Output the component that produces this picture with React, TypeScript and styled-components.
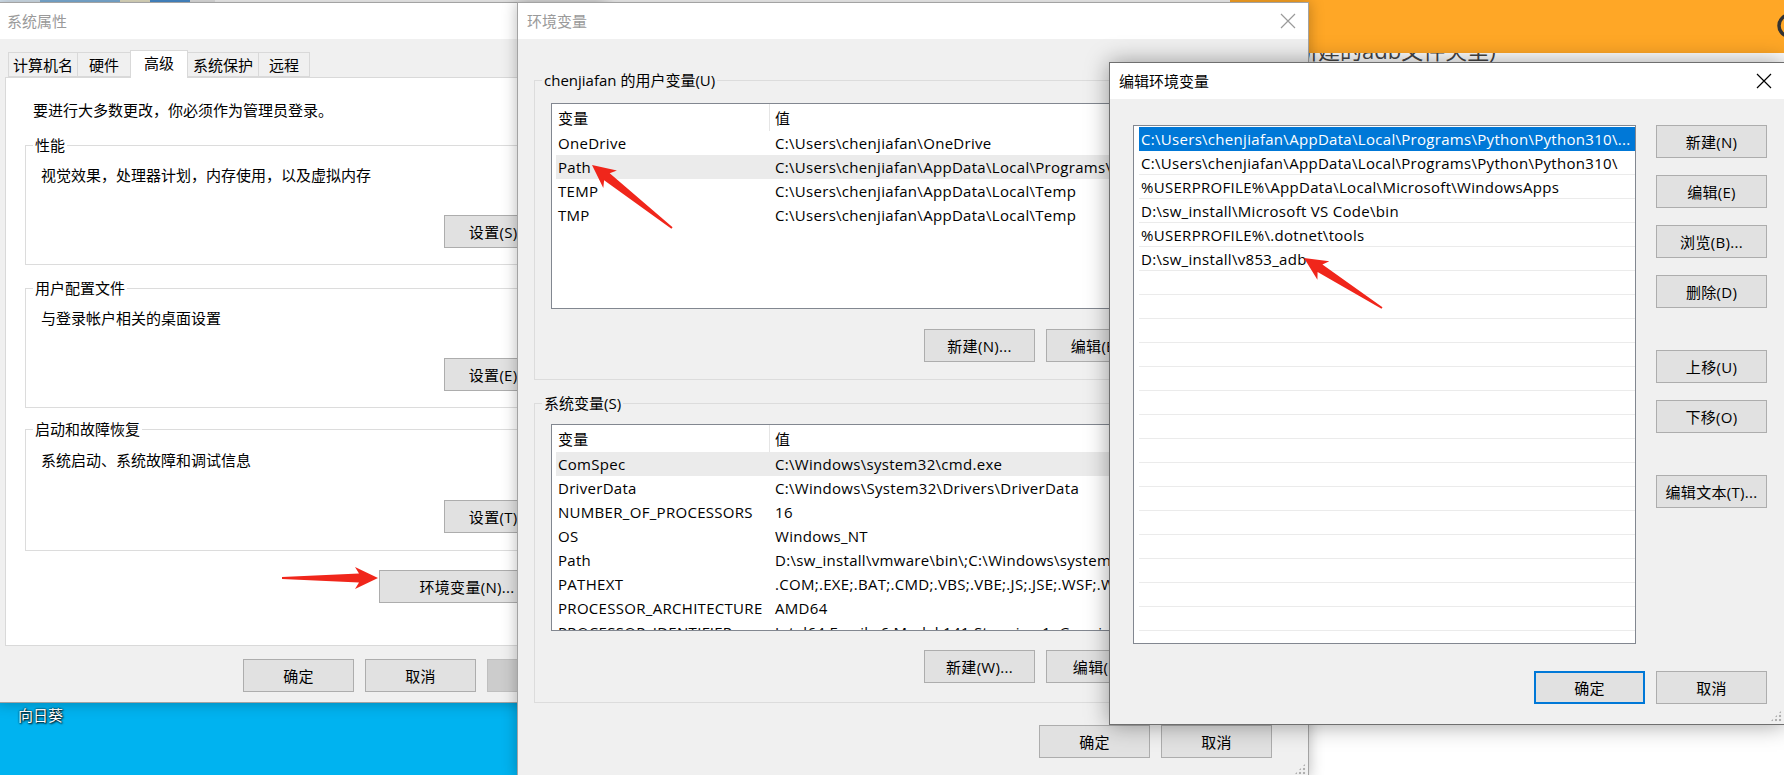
import styled, { createGlobalStyle } from 'styled-components';
import { Search } from 'lucide-react';

const GlobalStyle = createGlobalStyle`
  html, body {
    margin: 0;
    padding: 0;
    overflow: hidden;
  }
  body {
    font-family: "Open Sans", "Noto Sans CJK SC", sans-serif;
    font-size: 15px;
    line-height: 20px;
    letter-spacing: 0.3px;
    color: #000;
  }
  * {
    box-sizing: border-box;
  }
`;

const Desktop = styled.div`
  position: relative;
  width: 1784px;
  height: 775px;
  overflow: hidden;
  background: #00b3f0;
`;

const TopStrip = styled.div`
  position: absolute;
  left: 0;
  top: 0;
  width: 1240px;
  height: 4px;
  background: linear-gradient(
    to right,
    #d8e6f2 0 40px,
    #7fb2dc 40px 120px,
    #e9e4c8 120px 150px,
    #4a8fd1 150px 190px,
    #e6e6e6 190px 215px,
    #fafafa 215px
  );
`;

const DesktopLabel = styled.div`
  position: absolute;
  left: 18px;
  top: 705px;
  color: #fff;
  letter-spacing: 0;
  text-shadow: 1px 1px 2px #000, 0 0 2px #000;
`;

const Browser = styled.div`
  position: absolute;
  left: 1230px;
  top: 0;
  width: 560px;
  height: 775px;
  z-index: 1;
  display: flex;
  flex-direction: column;
  background: #fff;
`;

const BrowserHeader = styled.div`
  position: relative;
  z-index: 1;
  flex: none;
  height: 53px;
  display: flex;
  align-items: center;
  justify-content: flex-end;
  background: #ffa726;
  color: #333;

  svg {
    margin-right: -17px;
  }
`;

const BrowserText = styled.div`
  margin-top: -18px;
  padding-right: 324px;
  text-align: right;
  font-size: 22px;
  line-height: 30px;
  letter-spacing: 0;
  color: #444;
  white-space: nowrap;
`;

const Win = styled.div<{
  $x: number;
  $y: number;
  $w: number;
  $h: number;
  $z: number;
  $active?: boolean;
}>`
  position: absolute;
  left: ${p => p.$x}px;
  top: ${p => p.$y}px;
  width: ${p => p.$w}px;
  height: ${p => p.$h}px;
  z-index: ${p => p.$z};
  display: flex;
  flex-direction: column;
  background: #f0f0f0;
  border: 1px solid ${p => (p.$active ? '#6f6f6f' : '#a3a3a3')};
  box-shadow: ${p =>
    p.$active ? '0 0 22px rgba(0, 0, 0, 0.38)' : '0 0 14px rgba(0, 0, 0, 0.28)'};
`;

const TitleBar = styled.div<{$active?: boolean}>`
  flex: none;
  height: 36px;
  display: flex;
  align-items: center;
  justify-content: space-between;
  padding-left: 9px;
  background: #fff;
  letter-spacing: 0;
  color: ${p => (p.$active ? '#000' : '#9a9a9a')};
`;

const CloseIcon = styled.svg`
  margin-right: 12px;
`;

const Grip = styled.div`
  position: absolute;
  right: 2px;
  bottom: 2px;
  width: 12px;
  height: 12px;
  background: radial-gradient(circle, #b0b0b0 1px, transparent 1.6px) 0 0 / 4px 4px;
  clip-path: polygon(100% 0, 100% 100%, 0 100%);
`;

const Btn = styled.button<{$w?: number; $mt?: number; $focus?: boolean; $off?: boolean}>`
  flex: none;
  width: ${p => p.$w ?? 111}px;
  height: 33px;
  margin: ${p => p.$mt ?? 0}px 0 0 0;
  padding: 0;
  background: ${p => (p.$off ? '#cccccc' : '#e1e1e1')};
  border: ${p =>
    p.$focus ? '2px solid #0078d7' : `1px solid ${p.$off ? '#bfbfbf' : '#adadad'}`};
  color: ${p => (p.$off ? '#838383' : '#000')};
  font: inherit;
  letter-spacing: inherit;
  white-space: nowrap;
  overflow: hidden;
`;

const ButtonRow = styled.div<{$mt?: number; $gap?: number; $pr?: number}>`
  display: flex;
  justify-content: flex-end;
  gap: ${p => p.$gap ?? 11}px;
  margin-top: ${p => p.$mt ?? 0}px;
  padding-right: ${p => p.$pr ?? 0}px;
`;

/* system properties */

const SysBody = styled.div`
  flex: 1;
  display: flex;
  flex-direction: column;
  padding: 11px 7px 0 7px;
`;

const TabStrip = styled.div`
  display: flex;
  align-items: flex-end;
  height: 27px;
  margin-left: 3px;
`;

const Tab = styled.div<{$w: number; $active?: boolean}>`
  position: relative;
  z-index: ${p => (p.$active ? 1 : 0)};
  width: ${p => p.$w}px;
  height: ${p => (p.$active ? 28 : 25)}px;
  margin-bottom: ${p => (p.$active ? -1 : 0)}px;
  display: flex;
  align-items: center;
  justify-content: center;
  padding-bottom: ${p => (p.$active ? 4 : 0)}px;
  background: ${p => (p.$active ? '#fff' : '#f0f0f0')};
  border: 1px solid #d9d9d9;
  border-bottom: ${p => (p.$active ? 'none' : '1px solid #d9d9d9')};
  margin-right: -1px;
  letter-spacing: 0;
`;

const TabPanel = styled.div`
  height: 569px;
  display: flex;
  flex-direction: column;
  padding: 22px 20px 0 19px;
  background: #fff;
  border: 1px solid #d9d9d9;
`;

const Intro = styled.div`
  margin-left: 8px;
  letter-spacing: 0;
`;

const Group = styled.fieldset<{$mt: number; $pb: number}>`
  margin: ${p => p.$mt}px 0 0 0;
  padding: 0 21px ${p => p.$pb}px 0;
  min-width: 0;
  border: 1px solid #dcdcdc;
  display: flex;
  flex-direction: column;
`;

const Legend = styled.legend`
  margin-left: 7px;
  padding: 0 2px;
  line-height: 20px;
  letter-spacing: 0;
`;

const GroupText = styled.div<{$mt: number}>`
  margin: ${p => p.$mt}px 0 0 15px;
  letter-spacing: 0;
`;

/* environment variables */

const EnvBody = styled.div`
  flex: 1;
  display: flex;
  flex-direction: column;
  padding: 31px 16px 0 16px;
`;

const VarGroup = styled.fieldset<{$mt: number; $pb: number}>`
  margin: ${p => p.$mt}px 0 0 0;
  padding: 0 12px ${p => p.$pb}px 0;
  min-width: 0;
  border: 1px solid #dcdcdc;
  display: flex;
  flex-direction: column;
`;

const ListView = styled.div<{$mt: number; $h: number}>`
  height: ${p => p.$h}px;
  margin: ${p => p.$mt}px 0 0 16px;
  padding-left: 4px;
  background: #fff;
  border: 1px solid #828790;
  overflow: hidden;
`;

const ListHead = styled.div`
  display: grid;
  grid-template-columns: 213px 1fr;
  height: 27px;
  white-space: nowrap;
`;

const HeadCell = styled.div<{$divider?: boolean}>`
  display: flex;
  align-items: center;
  padding-left: ${p => (p.$divider ? 5 : 2)}px;
  border-left: ${p => (p.$divider ? '1px solid #e5e5e5' : 'none')};
  overflow: hidden;
`;

const ListRow = styled.div<{$sel?: boolean}>`
  display: grid;
  grid-template-columns: 213px 1fr;
  align-items: center;
  height: 24px;
  white-space: nowrap;
  background: ${p => (p.$sel ? '#ebebeb' : 'transparent')};
`;

const Cell = styled.div<{$value?: boolean}>`
  padding-left: ${p => (p.$value ? 6 : 2)}px;
  overflow: hidden;
`;

/* edit dialog */

const EditBody = styled.div`
  flex: 1;
  display: flex;
  flex-direction: column;
  padding: 26px 17px 0 23px;
`;

const EditMain = styled.div`
  display: flex;
  gap: 20px;
`;

const PathList = styled.div`
  width: 503px;
  height: 519px;
  padding: 1px 0 0 5px;
  background: #fff;
  border: 1px solid #828790;
  overflow: hidden;
`;

const PathRow = styled.div<{$sel?: boolean}>`
  height: 24px;
  display: flex;
  align-items: center;
  padding-left: 2px;
  white-space: nowrap;
  overflow: hidden;
  border-bottom: 1px solid ${p => (p.$sel ? '#0078d7' : '#ebebeb')};
  background: ${p => (p.$sel ? '#0078d7' : 'transparent')};
  color: ${p => (p.$sel ? '#fff' : '#000')};
`;

const SideButtons = styled.div`
  display: flex;
  flex-direction: column;
`;

const Overlay = styled.svg`
  position: absolute;
  left: 0;
  top: 0;
  z-index: 10;
  pointer-events: none;
`;

const userVars = [
  ['OneDrive', 'C:\\Users\\chenjiafan\\OneDrive'],
  ['Path', 'C:\\Users\\chenjiafan\\AppData\\Local\\Programs\\Python\\Python310\\Scripts\\;C:\\Users'],
  ['TEMP', 'C:\\Users\\chenjiafan\\AppData\\Local\\Temp'],
  ['TMP', 'C:\\Users\\chenjiafan\\AppData\\Local\\Temp'],
];

const sysVars = [
  ['ComSpec', 'C:\\Windows\\system32\\cmd.exe'],
  ['DriverData', 'C:\\Windows\\System32\\Drivers\\DriverData'],
  ['NUMBER_OF_PROCESSORS', '16'],
  ['OS', 'Windows_NT'],
  ['Path', 'D:\\sw_install\\vmware\\bin\\;C:\\Windows\\system32;C:\\Windows'],
  ['PATHEXT', '.COM;.EXE;.BAT;.CMD;.VBS;.VBE;.JS;.JSE;.WSF;.WSH;.MSC'],
  ['PROCESSOR_ARCHITECTURE', 'AMD64'],
  ['PROCESSOR_IDENTIFIER', 'Intel64 Family 6 Model 141 Stepping 1, GenuineIntel'],
];

const paths = [
  'C:\\Users\\chenjiafan\\AppData\\Local\\Programs\\Python\\Python310\\...',
  'C:\\Users\\chenjiafan\\AppData\\Local\\Programs\\Python\\Python310\\',
  '%USERPROFILE%\\AppData\\Local\\Microsoft\\WindowsApps',
  'D:\\sw_install\\Microsoft VS Code\\bin',
  '%USERPROFILE%\\.dotnet\\tools',
  'D:\\sw_install\\v853_adb',
];

const tabs = [
  {label: '计算机名', w: 70},
  {label: '硬件', w: 54},
  {label: '高级', w: 58, active: true},
  {label: '系统保护', w: 72},
  {label: '远程', w: 52},
];

// tip / tail of the red annotation arrows
const arrows: [number, number, number, number][] = [
  [378, 578, 282, 578],
  [592, 165, 672, 228],
  [1304, 258, 1382, 308],
];

function arrowPoints([tx, ty, sx, sy]: [number, number, number, number]) {
  const len = Math.hypot(tx - sx, ty - sy);
  const ux = (tx - sx) / len;
  const uy = (ty - sy) / len;
  const nx = -uy;
  const ny = ux;
  const headLen = 23;
  const headHalf = 11;
  const neckHalf = 4.5;
  const tailHalf = 1;
  const at = (d: number, w: number) =>
    `${(tx - ux * d + nx * w).toFixed(1)},${(ty - uy * d + ny * w).toFixed(1)}`;
  return [
    at(len, tailHalf),
    at(headLen - 4, neckHalf),
    at(headLen, headHalf),
    at(0, 0),
    at(headLen, -headHalf),
    at(headLen - 4, -neckHalf),
    at(len, -tailHalf),
  ].join(' ');
}

function Close() {
  return (
    <CloseIcon width="16" height="16" viewBox="0 0 16 16">
      <path d="M1 1L15 15M15 1L1 15" stroke="currentColor" strokeWidth="1.2" fill="none" />
    </CloseIcon>
  );
}

function VarList({rows, mt, h, sel}: {rows: string[][]; mt: number; h: number; sel: number}) {
  return (
    <ListView $mt={mt} $h={h}>
      <ListHead>
        <HeadCell>变量</HeadCell>
        <HeadCell $divider>值</HeadCell>
      </ListHead>
      {rows.map(([name, value], i) => (
        <ListRow key={name + i} $sel={i === sel}>
          <Cell>{name}</Cell>
          <Cell $value>{value}</Cell>
        </ListRow>
      ))}
    </ListView>
  );
}

export default function App() {
  return (
    <Desktop>
      <GlobalStyle />
      <TopStrip />
      <DesktopLabel>向日葵</DesktopLabel>

      <Browser>
        <BrowserHeader>
          <Search size={32} strokeWidth={2.6} />
        </BrowserHeader>
        <BrowserText>解压到新建的adb文件夹里)</BrowserText>
      </Browser>

      <Win $x={-3} $y={2} $w={609} $h={701} $z={2}>
        <TitleBar>系统属性</TitleBar>
        <SysBody>
          <TabStrip>
            {tabs.map(t => (
              <Tab key={t.label} $w={t.w} $active={t.active}>
                {t.label}
              </Tab>
            ))}
          </TabStrip>
          <TabPanel>
            <Intro>要进行大多数更改，你必须作为管理员登录。</Intro>
            <Group $mt={15} $pb={16}>
              <Legend>性能</Legend>
              <GroupText $mt={10}>视觉效果，处理器计划，内存使用，以及虚拟内存</GroupText>
              <ButtonRow $mt={30}>
                <Btn>设置(S)...</Btn>
              </ButtonRow>
            </Group>
            <Group $mt={13} $pb={16}>
              <Legend>用户配置文件</Legend>
              <GroupText $mt={10}>与登录帐户相关的桌面设置</GroupText>
              <ButtonRow $mt={30}>
                <Btn>设置(E)...</Btn>
              </ButtonRow>
            </Group>
            <Group $mt={11} $pb={17}>
              <Legend>启动和故障恢复</Legend>
              <GroupText $mt={11}>系统启动、系统故障和调试信息</GroupText>
              <ButtonRow $mt={30}>
                <Btn>设置(T)...</Btn>
              </ButtonRow>
            </Group>
            <ButtonRow $mt={19} $pr={22}>
              <Btn $w={176}>环境变量(N)...</Btn>
            </ButtonRow>
          </TabPanel>
          <ButtonRow $mt={13}>
            <Btn>确定</Btn>
            <Btn>取消</Btn>
            <Btn $off>应用(A)</Btn>
          </ButtonRow>
        </SysBody>
      </Win>

      <Win $x={517} $y={2} $w={792} $h={776} $z={3}>
        <TitleBar>
          环境变量
          <Close />
        </TitleBar>
        <EnvBody>
          <VarGroup $mt={0} $pb={17}>
            <Legend>chenjiafan 的用户变量(U)</Legend>
            <VarList rows={userVars} mt={13} h={206} sel={1} />
            <ButtonRow $mt={20}>
              <Btn>新建(N)...</Btn>
              <Btn>编辑(E)...</Btn>
              <Btn>删除(D)</Btn>
            </ButtonRow>
          </VarGroup>
          <VarGroup $mt={13} $pb={19}>
            <Legend>系统变量(S)</Legend>
            <VarList rows={sysVars} mt={11} h={207} sel={0} />
            <ButtonRow $mt={19}>
              <Btn>新建(W)...</Btn>
              <Btn>编辑(I)...</Btn>
              <Btn>删除(L)</Btn>
            </ButtonRow>
          </VarGroup>
          <ButtonRow $mt={22} $pr={20}>
            <Btn>确定</Btn>
            <Btn>取消</Btn>
          </ButtonRow>
        </EnvBody>
        <Grip />
      </Win>

      <Win $x={1109} $y={62} $w={676} $h={663} $z={4} $active>
        <TitleBar $active>
          编辑环境变量
          <Close />
        </TitleBar>
        <EditBody>
          <EditMain>
            <PathList>
              {paths.map((p, i) => (
                <PathRow key={p + i} $sel={i === 0}>
                  {p}
                </PathRow>
              ))}
              {Array.from({length: 16}, (_, i) => (
                <PathRow key={'empty' + i} />
              ))}
            </PathList>
            <SideButtons>
              <Btn>新建(N)</Btn>
              <Btn $mt={17}>编辑(E)</Btn>
              <Btn $mt={17}>浏览(B)...</Btn>
              <Btn $mt={17}>删除(D)</Btn>
              <Btn $mt={42}>上移(U)</Btn>
              <Btn $mt={17}>下移(O)</Btn>
              <Btn $mt={42}>编辑文本(T)...</Btn>
            </SideButtons>
          </EditMain>
          <ButtonRow $mt={27} $gap={11}>
            <Btn $focus>确定</Btn>
            <Btn>取消</Btn>
          </ButtonRow>
        </EditBody>
        <Grip />
      </Win>

      <Overlay width="1784" height="775" viewBox="0 0 1784 775">
        {arrows.map((a, i) => (
          <polygon key={i} points={arrowPoints(a)} fill="#f0261b" />
        ))}
      </Overlay>
    </Desktop>
  );
}
